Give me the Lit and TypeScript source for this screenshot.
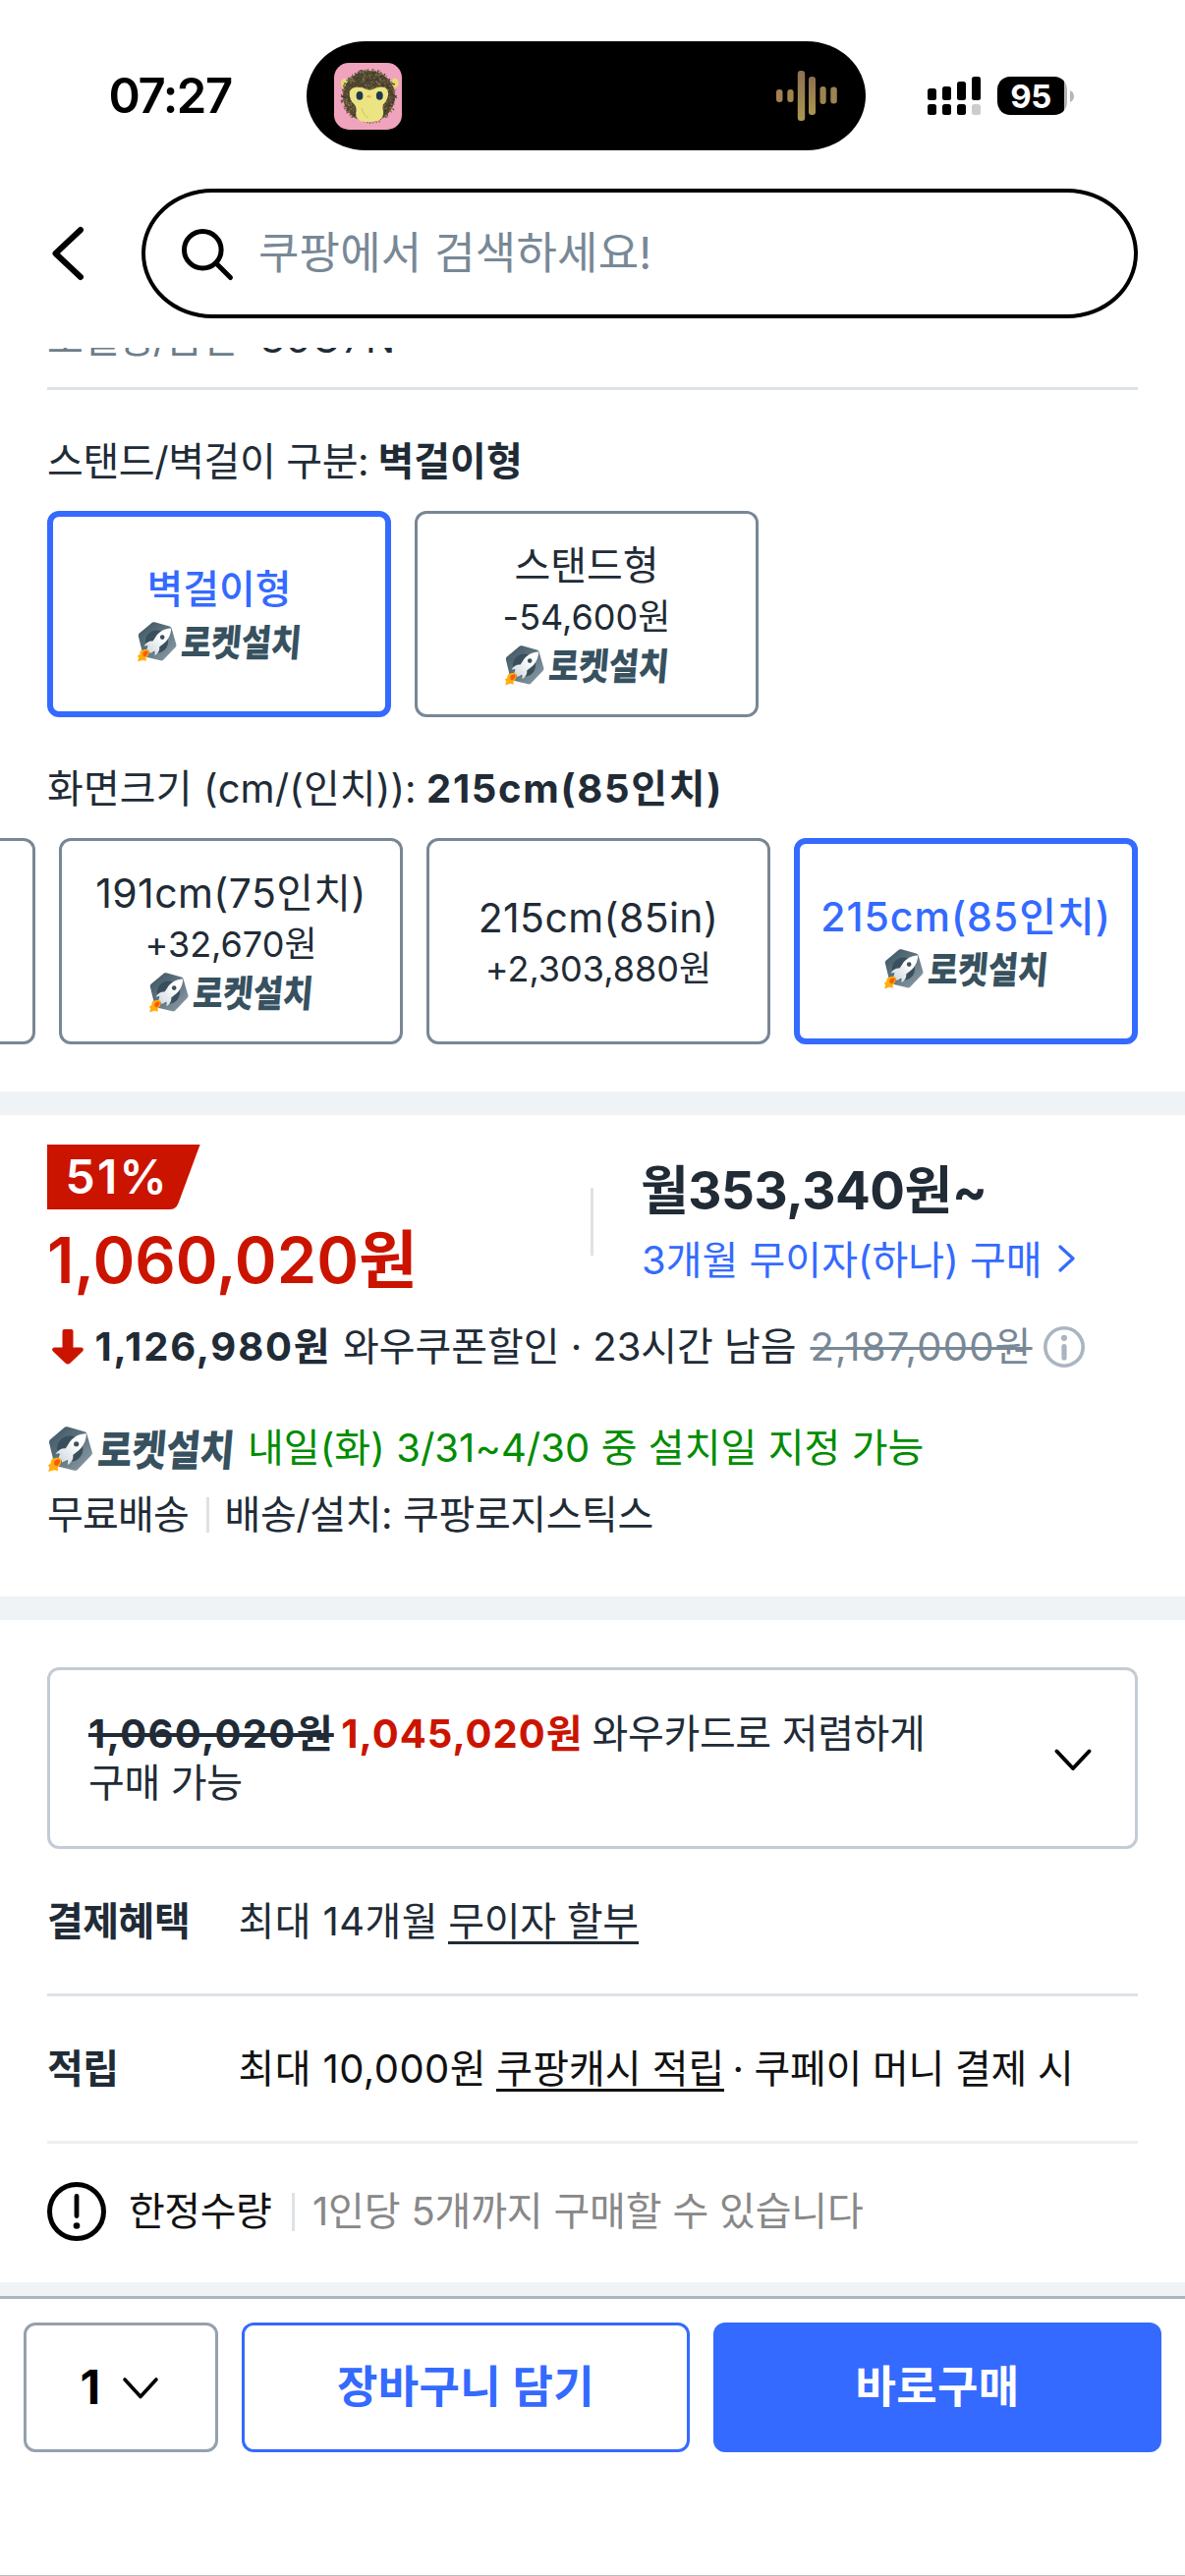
import { LitElement, html, svg, css, nothing } from "lit";
import { classMap } from "lit/directives/class-map.js";

/** Rocket emblem with the delivery wordmark beside it. */
class RocketBadge extends LitElement {
  static styles = css`
    :host {
      display: block;
      width: 167px;
      height: 40px;
      flex: none;
    }
    svg {
      display: block;
      width: 100%;
      height: 100%;
      overflow: visible;
    }
    .word {
      font-family: "Noto Sans CJK KR", sans-serif;
      font-weight: 900;
      font-size: 38px;
      fill: #37515f;
    }
  `;
  render() {
    return html`<svg viewBox="0 0 167 40">
      <defs>
        <linearGradient id="hex" x1="0" y1="0" x2="1" y2="1">
          <stop offset="0" stop-color="#3c5361"></stop>
          <stop offset="0.45" stop-color="#5d727f"></stop>
          <stop offset="1" stop-color="#8fa0ab"></stop>
        </linearGradient>
        <linearGradient id="body" x1="1" y1="0" x2="0" y2="1">
          <stop offset="0.3" stop-color="#ffffff"></stop>
          <stop offset="1" stop-color="#c9d3da"></stop>
        </linearGradient>
      </defs>
      <path
        d="M15 .4Q16 0 17.4.3L32.6 4.6Q34.2 5 34.6 6.6L39.4 23Q39.8 24.6 38.6 25.8L26.4 38.4Q25.2 39.8 23.4 39.3L7.6 35.4Q6 35 5.4 33.2L.9 14.6Q.5 13 1.6 11.8Z"
        fill="url(#hex)"
      ></path>
      <circle cx="19.5" cy="20" r="11.6" fill="#3a4f5c"></circle>
      <path
        d="M34.2 6.4C28 6.2 21.4 9.6 17.8 16.2L15.6 19.6C12 19.2 9 21 6.6 24.4L10.4 24.2L9 29.4L11.8 29.8L12.4 32L17.4 29.8L17.6 34.2C21.4 31.6 22.8 28.6 22.2 25.4L26 22.4C31.4 18.4 34 12.6 34.2 6.4Z"
        fill="url(#body)"
      ></path>
      <circle cx="25.2" cy="15.6" r="2.3" fill="#3a4f5c"></circle>
      <path
        d="M3 29.6C5.4 27.8 9.4 27.4 11 28.6C12.4 30.6 11.6 34.4 8.6 36.6L8.8 39.8L5.4 38.8L.2 40.4L1.2 36.4L-.2 34.4L2 33.4Z"
        fill="#ffae0d"
      ></path>
      <path d="M5.6 31C7.4 29.4 9.8 29.2 10.4 30C11 31.8 9.6 34.6 7.2 35.4C5.4 35 4.8 33 5.6 31Z" fill="#fb5a0a"></path>
      <text
        class="word"
        transform="translate(43.5 35) skewX(-5)"
        textLength="122"
        lengthAdjust="spacingAndGlyphs"
      >로켓설치</text>
    </svg>`;
  }
}
customElements.define("rocket-badge", RocketBadge);

/** Furry monkey app picture shown in the island. */
class MonkeyIcon extends LitElement {
  static styles = css`
    :host {
      display: block;
      width: 69px;
      height: 68px;
    }
    svg {
      display: block;
    }
  `;
  private fur() {
    const tones = ["#3a3226", "#544630", "#7a7242", "#4b3c2f", "#86694c", "#67602f", "#2f3a48", "#8b8550"];
    let seed = 7;
    const rnd = () => (seed = (seed * 16807) % 2147483647) / 2147483647;
    return Array.from({ length: 620 }, () => {
      const a = rnd() * Math.PI * 2;
      const r = Math.sqrt(rnd());
      const x = 35.5 + Math.cos(a) * r * 27.5;
      const y = 34 + Math.sin(a) * r * 27;
      const b = a + (rnd() - 0.5) * 2;
      return svg`<line x1=${x} y1=${y} x2=${x + Math.cos(b) * 2} y2=${y + Math.sin(b) * 2}
        stroke=${tones[Math.floor(rnd() * tones.length)]} stroke-width="1.1"></line>`;
    });
  }
  render() {
    return html`<svg width="69" height="68" viewBox="0 0 69 68">
      <defs><clipPath id="tile"><rect width="69" height="68" rx="15"></rect></clipPath></defs>
      <g clip-path="url(#tile)">
        <rect width="69" height="68" fill="#f0a3bd"></rect>
        <ellipse cx="10.5" cy="21" rx="3.6" ry="5" fill="#e6dc74"></ellipse>
        <ellipse cx="62" cy="20.5" rx="3.6" ry="5" fill="#e6dc74"></ellipse>
        <ellipse cx="35.5" cy="34" rx="26.5" ry="26" fill="#54482f"></ellipse>
        ${this.fur()}
        <path
          d="M15.6 31Q16 26 21 25Q28 24 33 27Q36 28.2 39 27Q45 23.4 51 24.8Q55.8 27 55 33Q53.8 39 49.8 42.4Q49 46 50.2 51Q49.6 58.4 42.4 59.6Q34 61.2 26.6 59.2Q22 57 22.2 51Q23.2 46 21.2 43Q15.6 38 15.6 31Z"
          fill="#ece382"
        ></path>
        <ellipse cx="26" cy="33.4" rx="3.4" ry="4.3" fill="#1d3850"></ellipse>
        <ellipse cx="46.3" cy="33.4" rx="3.4" ry="4.3" fill="#1d3850"></ellipse>
        <ellipse cx="35.4" cy="34.2" rx="2" ry="1.2" fill="#eab254"></ellipse>
        <path d="M28 46Q30 54 35 56" stroke="#c3ba5c" stroke-width=".8" fill="none"></path>
      </g>
    </svg>`;
  }
}
customElements.define("monkey-icon", MonkeyIcon);

interface Option {
  name: string;
  price?: string;
  rocket?: boolean;
  selected?: boolean;
  latin?: boolean;
}

/** One selectable variant tile. */
class OptionCard extends LitElement {
  static properties = { option: { attribute: false } };
  declare option: Option;
  static styles = css`
    :host {
      display: block;
      flex: none;
      width: 350px;
      height: 210px;
    }
    .card {
      box-sizing: border-box;
      width: 100%;
      height: 100%;
      border: 3px solid #788795;
      border-radius: 12px;
      display: flex;
      flex-direction: column;
      align-items: center;
      justify-content: center;
      color: #212b36;
      white-space: nowrap;
    }
    .card.selected {
      border: 6px solid #346aff;
    }
    .name {
      font-size: 40px;
      line-height: 50px;
    }
    .name.latin {
      font-size: 41px;
      letter-spacing: 0.4px;
    }
    .selected .name {
      color: #346aff;
      font-weight: 500;
    }
    .selected .name.latin {
      letter-spacing: 1px;
    }
    .price {
      font-size: 36px;
      line-height: 55px;
      height: 49px;
    }
    .badge {
      box-sizing: border-box;
      height: 50px;
      padding-top: 8px;
    }
    .price + .badge {
      padding-top: 7px;
    }
  `;
  render() {
    const o = this.option;
    if (!o) return nothing;
    return html`<div class=${classMap({ card: true, selected: !!o.selected })}>
      <div class=${classMap({ name: true, latin: !!o.latin })}>${o.name}</div>
      ${o.price ? html`<div class="price">${o.price}</div>` : nothing}
      ${o.rocket ? html`<div class="badge"><rocket-badge></rocket-badge></div>` : nothing}
    </div>`;
  }
}
customElements.define("option-card", OptionCard);

const MOUNTS: Option[] = [
  { name: "벽걸이형", rocket: true, selected: true },
  { name: "스탠드형", price: "-54,600원", rocket: true },
];
const SIZES: Option[] = [
  { name: "" },
  { name: "191cm(75인치)", price: "+32,670원", rocket: true, latin: true },
  { name: "215cm(85in)", price: "+2,303,880원", latin: true },
  { name: "215cm(85인치)", rocket: true, selected: true, latin: true },
];

class AppRoot extends LitElement {
  static styles = css`
    :host {
      display: block;
      width: 1206px;
      height: 2622px;
      overflow: hidden;
      background: #fff;
      color: #212b36;
      font-family: Inter, "Noto Sans CJK KR", sans-serif;
      font-size: 40px;
      line-height: 50px;
    }
    * {
      box-sizing: border-box;
    }
    svg {
      display: block;
      flex: none;
      overflow: visible;
    }
    .screen {
      display: flex;
      flex-direction: column;
      height: 2622px;
      white-space: nowrap;
      border-bottom: 1px solid #b9bcbe;
    }
    .status {
      display: grid;
      grid-template-columns: 312px 569px 1fr;
      align-items: center;
      height: 150px;
      margin-top: 42px;
      padding-bottom: 39px;
      flex: none;
    }
    .time {
      padding-left: 110.5px;
      font-size: 49px;
      font-weight: 600;
      letter-spacing: -1.4px;
      color: #000;
    }
    .island {
      height: 111px;
      border-radius: 60px / 55.5px;
      background: #000;
      display: flex;
      align-items: center;
      justify-content: space-between;
      padding: 0 29px 0 28px;
    }
    .meters {
      display: flex;
      align-items: center;
      padding-left: 63px;
    }
    .battery {
      display: flex;
      align-items: center;
      margin-left: 17px;
      gap: 3px;
    }
    .cell {
      width: 71px;
      height: 39px;
      border-radius: 13px;
      background: linear-gradient(to right, #000 68px, #b5b5b5 68px);
      padding-right: 3px;
      text-align: center;
      font-size: 33px;
      line-height: 40px;
      font-weight: 700;
      letter-spacing: -0.5px;
      color: #fff;
    }
    .header {
      flex: none;
      height: 162px;
      display: flex;
      align-items: flex-start;
      padding-left: 48px;
    }
    .back {
      width: 96px;
      height: 132px;
      display: flex;
      align-items: center;
      padding-left: 5px;
    }
    .search {
      width: 1014px;
      height: 132px;
      border: 4px solid #000;
      border-radius: 72px / 66px;
      display: flex;
      align-items: center;
      padding-left: 37px;
      font-size: 45px;
      letter-spacing: 0.2px;
      color: #788896;
      gap: 26px;
    }
    .spec {
      flex: none;
      height: 43px;
      margin: 0 48px;
      overflow: hidden;
      border-bottom: 3px solid #dde2e6;
    }
    .spec-line {
      display: flex;
      line-height: 40px;
      margin-top: -29.5px;
    }
    .spec-key {
      width: 217px;
      letter-spacing: -0.9px;
      color: #6b7d8a;
    }
    .spec-value {
      letter-spacing: 1.5px;
    }
    .options {
      flex: none;
      padding: 48px 0 0 48px;
    }
    .options.last {
      padding-bottom: 48px;
    }
    .options-title {
      margin-bottom: 25px;
    }
    .options-title b {
      font-weight: 700;
    }
    .lead {
      display: inline-block;
      letter-spacing: -0.4px;
      width: 336.5px;
    }
    .lead.wide {
      letter-spacing: 0.1px;
      width: 386px;
    }
    .wide + b {
      letter-spacing: 1.7px;
    }
    .cards {
      display: flex;
      gap: 24px;
    }
    .cards.scrolled {
      margin-left: -362px;
    }
    .band {
      flex: none;
      height: 24px;
      background: #eff3f6;
    }
    .pricing {
      flex: none;
      height: 490px;
      padding: 30px 48px 0;
    }
    .price-row {
      display: flex;
      height: 158px;
    }
    .price-main {
      width: 553px;
    }
    .percent {
      width: 156px;
      height: 66px;
      background: #cb1400;
      clip-path: path("M0 0H155.6L133.4 60Q131 66 124.5 66H0Z");
      padding-left: 18.5px;
      font-size: 48px;
      line-height: 66px;
      font-weight: 600;
      letter-spacing: 2.2px;
      color: #fff;
    }
    .price {
      margin-top: 12px;
      font-size: 65px;
      line-height: 80px;
      font-weight: 600;
      letter-spacing: 0;
      color: #cb1400;
    }
    .price-split {
      width: 3px;
      height: 69px;
      margin-top: 44px;
      background: #dde2e6;
    }
    .monthly {
      padding: 21.5px 0 0 48px;
    }
    .monthly-price {
      font-size: 53px;
      font-weight: 700;
      letter-spacing: -0.45px;
      margin-bottom: 21px;
    }
    .monthly-plan {
      display: flex;
      align-items: center;
      color: #346aff;
      padding-left: 1px;
    }
    .monthly-plan svg {
      margin: -3px 0 0 16px;
    }
    .coupon {
      display: flex;
      align-items: center;
      margin-top: 23px;
      padding-left: 5px;
    }
    .coupon b {
      margin-left: 11.5px;
      width: 252.5px;
      letter-spacing: 1.8px;
      font-weight: 700;
    }
    .coupon-text {
      width: 475.5px;
      letter-spacing: -0.05px;
    }
    .was {
      letter-spacing: 1.2px;
      color: #788896;
      text-decoration: line-through;
      text-decoration-thickness: 3px;
      width: 237px;
    }
    .rocket-row {
      display: flex;
      align-items: center;
      margin-top: 52.5px;
    }
    .rocket-row rocket-badge {
      width: 190px;
      height: 45.5px;
      margin: 2px 13px 0 1px;
    }
    .arrival {
      color: #008c00;
      letter-spacing: 0.05px;
    }
    .shipping {
      display: flex;
      align-items: center;
      margin-top: 18.5px;
    }
    .free {
      letter-spacing: -0.8px;
      width: 162px;
    }
    .bar {
      width: 3px;
      height: 36px;
      background: #dde2e6;
    }
    .carrier {
      letter-spacing: -0.4px;
      margin-left: 15.5px;
    }
    .wow {
      flex: none;
      margin: 48px 48px 0;
      height: 185px;
      border: 3px solid #c3ccd5;
      border-radius: 12px;
      display: flex;
      align-items: center;
      justify-content: space-between;
      padding: 0 44px 0 39px;
    }
    .wow svg {
      margin-top: 3px;
    }
    .old,
    .now {
      display: inline-block;
      font-weight: 700;
    }
    .old {
      letter-spacing: 1.35px;
      text-decoration: line-through;
      text-decoration-thickness: 4px;
      margin-right: 7.5px;
    }
    .now {
      letter-spacing: 1px;
      color: #cb1400;
      margin-right: 9px;
    }
    .wow-text {
      letter-spacing: -0.35px;
    }
    .benefit {
      flex: none;
      height: 150px;
      margin: 0 48px;
      border-bottom: 3px solid #dde2e6;
      display: flex;
      align-items: center;
    }
    .benefit.pale {
      border-color: #eee;
    }
    .benefit b {
      width: 194.5px;
      font-weight: 700;
      letter-spacing: -0.5px;
    }
    .up {
      letter-spacing: 0.4px;
    }
    .link {
      display: inline-block;
      height: 48px;
      line-height: 50px;
      letter-spacing: -0.3px;
      border-bottom: 3px solid currentColor;
      margin-top: -1px;
    }
    .up + .link {
      margin-left: 10.5px;
    }
    .pale .link {
      letter-spacing: 0;
    }
    .pale .up,
    .pale .link,
    .after {
      color: #111;
    }
    .after {
      letter-spacing: -0.3px;
      margin-left: 8px;
    }
    .limit {
      flex: none;
      height: 141px;
      margin: 0 48px;
      display: flex;
      align-items: center;
      padding-bottom: 3px;
      color: #111;
    }
    .limit-name {
      margin-left: 23px;
      width: 166px;
      letter-spacing: -0.45px;
    }
    .limit .bar {
      height: 39px;
    }
    .limit-note {
      color: #888;
      margin-left: 18px;
      letter-spacing: -0.18px;
    }
    .band.short {
      height: 14px;
    }
    .buy-bar {
      flex: none;
      border-top: 3px solid #aab5bf;
      padding: 24px 24px 0;
      display: grid;
      grid-template-columns: 198px 456px 456px;
      gap: 24px;
    }
    .btn {
      height: 132px;
      border-radius: 12px;
      display: flex;
      align-items: center;
      justify-content: center;
      font-size: 45px;
      font-weight: 600;
      letter-spacing: 0.3px;
    }
    .qty {
      border: 3px solid #94a1ae;
      color: #000;
      font-size: 48px;
      font-weight: 700;
      gap: 22px;
      padding-right: 4px;
    }
    .qty svg {
      margin-top: 2px;
    }
    .cart {
      border: 3px solid #346aff;
      color: #346aff;
    }
    .buy {
      background: #346aff;
      color: #fff;
    }
  `;

  private wave() {
    const bars = [
      [0, 19, 6.5, 13, "#a08058"],
      [11.3, 19, 6.3, 13, "#a0854f"],
      [21.8, 0, 7.4, 51, "url(#gold)"],
      [33, 6, 7, 39, "url(#gold)"],
      [44.5, 16, 6.2, 18, "#9c8450"],
      [55.3, 16.5, 6.5, 17, "#9c8254"],
    ];
    return html`<svg width="62" height="51" viewBox="0 0 62 51">
      <defs>
        <linearGradient id="gold" x1="0" y1="0" x2="0" y2="1">
          <stop offset="0" stop-color="#8e7052"></stop>
          <stop offset="1" stop-color="#ab9650"></stop>
        </linearGradient>
      </defs>
      ${bars.map(([x, y, w, h, c]) => svg`<rect x=${x} y=${y} width=${w} height=${h} rx="3" fill=${c}></rect>`)}
    </svg>`;
  }

  private signal() {
    return html`<svg width="54" height="39" viewBox="0 0 54 39">
      ${[12, 10, 5, 0].map(
        (y, i) => svg`
          <rect x=${i * 15} y=${y} width="9" height=${24 - y} rx="2.5" fill="#000"></rect>
          <rect x=${i * 15} y="28" width="9" height="11" rx="2.5" fill=${i === 3 ? "#ccc" : "#000"}></rect>`,
      )}
    </svg>`;
  }

  render() {
    return html`<div class="screen">
      <div class="status">
        <div class="time">07:27</div>
        <div class="island"><monkey-icon></monkey-icon>${this.wave()}</div>
        <div class="meters">
          ${this.signal()}
          <div class="battery">
            <div class="cell">95</div>
            <svg width="4" height="12" viewBox="0 0 4 12"><path d="M0 0Q4 2 4 6T0 12Z" fill="#b5b5b5"></path></svg>
          </div>
        </div>
      </div>

      <div class="header">
        <div class="back">
          <svg width="32" height="54" viewBox="0 0 32 54" fill="none" stroke="#000" stroke-width="6" stroke-linecap="round" stroke-linejoin="round">
            <path d="M29 3L3.5 27L29 51"></path>
          </svg>
        </div>
        <div class="search">
          <svg width="52" height="52" viewBox="0 0 52 52" fill="none" stroke="#000" stroke-width="5" stroke-linecap="round">
            <circle cx="21.3" cy="22.3" r="18.8"></circle>
            <path d="M35 36L49.5 50.5"></path>
          </svg>
          <span>쿠팡에서 검색하세요!</span>
        </div>
      </div>

      <div class="spec">
        <div class="spec-line"><span class="spec-key">모델명/품번</span><span class="spec-value">85C7N</span></div>
      </div>

      <div class="options">
        <div class="options-title"><span class="lead">스탠드/벽걸이 구분:</span><b>벽걸이형</b></div>
        <div class="cards">${MOUNTS.map((o) => html`<option-card .option=${o}></option-card>`)}</div>
      </div>
      <div class="options last">
        <div class="options-title"><span class="lead wide">화면크기 (cm/(인치)):</span><b>215cm(85인치)</b></div>
        <div class="cards scrolled">${SIZES.map((o) => html`<option-card .option=${o}></option-card>`)}</div>
      </div>

      <div class="band"></div>

      <div class="pricing">
        <div class="price-row">
          <div class="price-main">
            <div class="percent">51%</div>
            <div class="price">1,060,020원</div>
          </div>
          <div class="price-split"></div>
          <div class="monthly">
            <div class="monthly-price">월353,340원~</div>
            <div class="monthly-plan">
              <span>3개월 무이자(하나) 구매</span>
              <svg width="17" height="28" viewBox="0 0 17 28" fill="none" stroke="#346aff" stroke-width="3.2" stroke-linecap="round" stroke-linejoin="round">
                <path d="M2 2L15 14L2 26"></path>
              </svg>
            </div>
          </div>
        </div>
        <div class="coupon">
          <svg width="32" height="36" viewBox="0 0 32 36">
            <path
              d="M12.5 0H19.5Q21.5 0 21.5 2V18.5H29.5Q33.4 19.4 31 22.6L18.4 34.6Q16 36.6 13.6 34.6L1 22.6Q-1.4 19.4 2.5 18.5H10.5V2Q10.5 0 12.5 0Z"
              fill="#cb1400"
            ></path>
          </svg>
          <b>1,126,980원</b>
          <span class="coupon-text">와우쿠폰할인 · 23시간 남음</span>
          <span class="was">2,187,000원</span>
          <svg width="42" height="42" viewBox="0 0 42 42" fill="#aab5bf">
            <circle cx="21" cy="21" r="19.2" fill="none" stroke="#aab5bf" stroke-width="3.6"></circle>
            <circle cx="21" cy="11.8" r="3.1"></circle>
            <rect x="18.4" y="18" width="5.2" height="16.5" rx="2.6"></rect>
          </svg>
        </div>
        <div class="rocket-row">
          <rocket-badge></rocket-badge>
          <span class="arrival">내일(화) 3/31~4/30 중 설치일 지정 가능</span>
        </div>
        <div class="shipping">
          <span class="free">무료배송</span>
          <div class="bar"></div>
          <span class="carrier">배송/설치: 쿠팡로지스틱스</span>
        </div>
      </div>

      <div class="band"></div>

      <div class="wow">
        <div>
          <span class="old">1,060,020원</span><span class="now">1,045,020원</span><span class="wow-text">와우카드로 저렴하게<br />구매 가능</span>
        </div>
        <svg width="38" height="23" viewBox="0 0 38 23" fill="none" stroke="#000" stroke-width="4" stroke-linecap="round" stroke-linejoin="round">
          <path d="M2.5 2.5L19 20L35.5 2.5"></path>
        </svg>
      </div>

      <div class="benefit">
        <b>결제혜택</b><span class="up">최대 14개월</span><span class="link">무이자 할부</span>
      </div>
      <div class="benefit pale">
        <b>적립</b><span class="up">최대 10,000원</span><span class="link">쿠팡캐시 적립</span>
        <span class="after">· 쿠페이 머니 결제 시</span>
      </div>

      <div class="limit">
        <svg width="60" height="60" viewBox="0 0 60 60">
          <circle cx="30" cy="30" r="27.5" fill="none" stroke="#000" stroke-width="5"></circle>
          <rect x="27.6" y="12" width="4.8" height="25" rx="2.4"></rect>
          <circle cx="30" cy="44.5" r="3.3"></circle>
        </svg>
        <span class="limit-name">한정수량</span>
        <div class="bar"></div>
        <span class="limit-note">1인당 5개까지 구매할 수 있습니다</span>
      </div>

      <div class="band short"></div>
      <div class="buy-bar">
        <div class="btn qty">
          <span>1</span>
          <svg width="36" height="22" viewBox="0 0 36 22" fill="none" stroke="#000" stroke-width="3.6" stroke-linecap="round" stroke-linejoin="round">
            <path d="M2 2L18 19.5L34 2"></path>
          </svg>
        </div>
        <div class="btn cart">장바구니 담기</div>
        <div class="btn buy">바로구매</div>
      </div>
    </div>`;
  }
}
customElements.define("app-root", AppRoot);
